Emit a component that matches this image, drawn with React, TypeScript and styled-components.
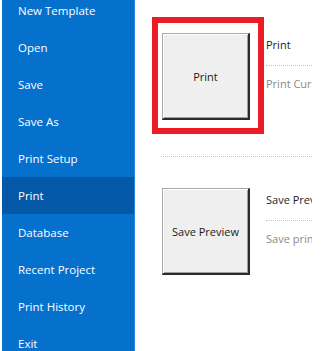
import React from 'react';
import styled, { createGlobalStyle } from 'styled-components';

const GlobalStyle = createGlobalStyle`
  html, body {
    margin: 0;
    padding: 0;
    background: #ffffff;
  }
  body {
    font-family: 'Open Sans', 'Noto Sans', 'Liberation Sans', sans-serif;
  }
`;

const Page = styled.div`
  width: 322px;
  height: 351px;
  display: flex;
  overflow: hidden;
  background: #ffffff;
`;

const Sidebar = styled.nav`
  width: 132px;
  margin-left: 2px;
  flex-shrink: 0;
  background: #0670cd;
  border-right: 1px solid #2a86dc;
  display: flex;
  flex-direction: column;
  overflow: hidden;
`;

const MenuList = styled.div`
  display: flex;
  flex-direction: column;
  margin-top: -8px;
`;

const MenuItem = styled.div<{ $active?: boolean }>`
  height: 37px;
  flex-shrink: 0;
  display: flex;
  align-items: center;
  padding-left: 16px;
  color: #ffffff;
  font-size: 11.5px;
  background: ${(p) => (p.$active ? '#0557a8' : 'transparent')};
`;

const Content = styled.main`
  flex: 1;
  padding: 33px 10px 0 26px;
  display: flex;
  flex-direction: column;
  min-width: 0;
`;

const Section = styled.div`
  display: flex;
  gap: 16px;
  padding-left: 1px;
`;

const ButtonFrame = styled.div`
  position: relative;
  flex-shrink: 0;
`;

const Highlight = styled.div`
  position: absolute;
  top: -16px;
  left: -10px;
  right: -14px;
  bottom: -14px;
  border: 6px solid #ec1c24;
  pointer-events: none;
`;

const BigButton = styled.button`
  width: 88px;
  height: 87px;
  box-sizing: border-box;
  background: #efefef;
  border-style: solid;
  border-width: 1px 2px 2px 1px;
  border-color: #a8a8a8 #2b2b2b #2b2b2b #a8a8a8;
  box-shadow: inset 1px 1px 0 #ffffff, inset -1px -1px 0 #a0a0a0;
  font-family: 'Open Sans', 'Noto Sans', sans-serif;
  font-size: 11px;
  color: #1a1a1a;
  padding: 0;
  cursor: default;
`;

const Info = styled.div`
  flex: 1;
  min-width: 0;
  padding-top: 4px;
  white-space: nowrap;
  overflow: hidden;
`;

const InfoTitle = styled.div`
  font-size: 11px;
  line-height: 16px;
  color: #1e1e1e;
`;

const InfoRule = styled.div`
  margin-top: 12px;
  border-top: 1px dotted #c4c4c4;
`;

const InfoText = styled.div`
  margin-top: 10px;
  font-size: 11px;
  line-height: 16px;
  color: #8a8a8a;
`;

const Divider = styled.div`
  margin: 36px 0 31px;
  border-top: 1px dotted #c4c4c4;
`;

const menu = [
  'New Template',
  'Open',
  'Save',
  'Save As',
  'Print Setup',
  'Print',
  'Database',
  'Recent Project',
  'Print History',
  'Exit',
];

export default function App() {
  return (
    <>
      <GlobalStyle />
      <Page>
        <Sidebar>
          <MenuList>
            {menu.map((m) => (
              <MenuItem key={m} $active={m === 'Print'}>
                {m}
              </MenuItem>
            ))}
          </MenuList>
        </Sidebar>
        <Content>
          <Section>
            <ButtonFrame>
              <BigButton>Print</BigButton>
              <Highlight />
            </ButtonFrame>
            <Info>
              <InfoTitle>Print</InfoTitle>
              <InfoRule />
              <InfoText>Print Current Template</InfoText>
            </Info>
          </Section>
          <Divider />
          <Section>
            <ButtonFrame>
              <BigButton>Save Preview</BigButton>
            </ButtonFrame>
            <Info>
              <InfoTitle>Save Preview</InfoTitle>
              <InfoRule />
              <InfoText>Save print preview</InfoText>
            </Info>
          </Section>
        </Content>
      </Page>
    </>
  );
}
